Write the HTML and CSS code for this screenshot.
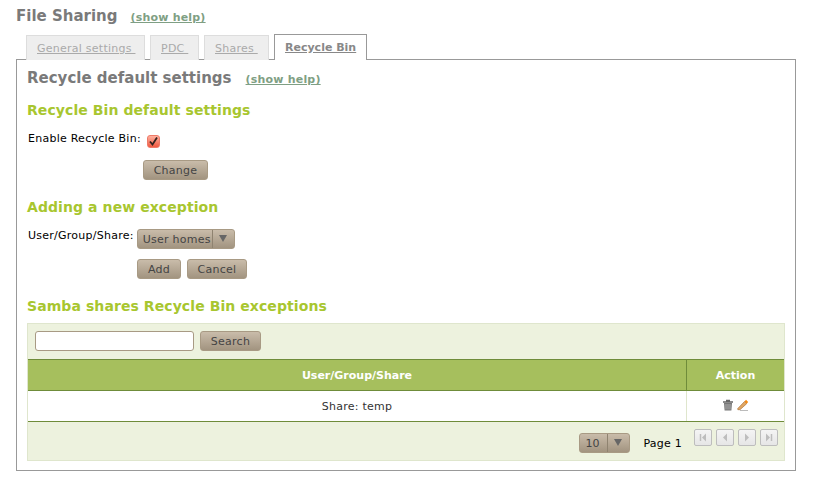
FILE: index.html
```html
<!DOCTYPE html>
<html lang="en">
<head>
  <meta charset="UTF-8" />
  <title>File Sharing</title>
  <link rel="stylesheet" href="styles.css">
</head>

<body>
  <div class="page-title">
    <h1>File Sharing</h1>
    <a class="help" href="#">(show help)</a>
  </div>

  <ul class="tabs">
    <li class="tab-general"><a href="#">General settings&nbsp;</a></li>
    <li class="tab-pdc"><a href="#">PDC&nbsp;</a></li>
    <li class="tab-shares"><a href="#">Shares&nbsp;</a></li>
    <li class="active"><a href="#">Recycle Bin</a></li>
  </ul>

  <div class="panel">
    <div class="panel-title">
      <h2>Recycle default settings</h2>
      <a class="help" href="#">(show help)</a>
    </div>

    <h3 class="first">Recycle Bin default settings</h3>
    <div class="field">
      <label>Enable Recycle Bin:</label>
      <span class="check">
        <svg width="11" height="11" viewBox="0 0 11 11"><path d="M2 5.500l2.500 3 4.500-7" fill="none" stroke="#33221e" stroke-width="1.800"/></svg>
      </span>
    </div>
    <div class="actions change-row">
      <button class="btn">Change</button>
    </div>

    <h3>Adding a new exception</h3>
    <div class="field select-field">
      <label>User/Group/Share:</label>
      <div class="select">
        <span class="select-value">User homes</span>
        <span class="select-arrow"></span>
      </div>
    </div>
    <div class="actions add-row">
      <button class="btn btn-add">Add</button>
      <button class="btn btn-cancel">Cancel</button>
    </div>

    <h3>Samba shares Recycle Bin exceptions</h3>
    <div class="grid">
      <div class="grid-search">
        <input type="text" />
        <button class="btn btn-search">Search</button>
      </div>
      <div class="grid-head">
        <div class="col-main">User/Group/Share</div>
        <div class="col-action">Action</div>
      </div>
      <div class="grid-row">
        <div class="col-main">Share: temp</div>
        <div class="col-action">
          <svg width="12" height="12" viewBox="0 0 12 12">
            <path d="M4 1.500h4M1 3h10" stroke="#666" stroke-width="1.400"/>
            <path d="M2 4h8l-.6 7.500H2.600z" fill="#777"/>
            <path d="M4 5v5.500M6 5v5.500M8 5v5.500" stroke="#bbb" stroke-width=".8"/>
          </svg>
          <svg width="12" height="12" viewBox="0 0 12 12">
            <path d="M.8 9.500L7.500 2.500l2.200 2.200-6.700 6H.8z" fill="#dfa765" stroke="#a3682f" stroke-width=".6"/>
            <path d="M7.500 2.500L9 .8l2.200 2.200-1.500 1.700z" fill="#f58a12"/>
            <path d="M3 11.500h8" stroke="#bbb"/>
          </svg>
        </div>
      </div>
      <div class="grid-foot">
        <div class="select small">
          <span class="select-value">10</span>
          <span class="select-arrow"></span>
        </div>
        <span class="page-no">Page 1</span>
        <div class="pager">
          <span class="pg"><svg width="8" height="9" viewBox="0 0 8 9"><path d="M1.500 1v7" stroke="#bdbdbd" stroke-width="1.500"/><path d="M7 .5v8L3 4.500z" fill="#bdbdbd"/></svg></span>
          <span class="pg"><svg width="8" height="9" viewBox="0 0 8 9"><path d="M6 .5v8L2 4.500z" fill="#bdbdbd"/></svg></span>
          <span class="pg"><svg width="8" height="9" viewBox="0 0 8 9"><path d="M2 .5v8L6 4.500z" fill="#bdbdbd"/></svg></span>
          <span class="pg"><svg width="8" height="9" viewBox="0 0 8 9"><path d="M1 .5v8L5 4.500z" fill="#bdbdbd"/><path d="M6.500 1v7" stroke="#bdbdbd" stroke-width="1.500"/></svg></span>
        </div>
      </div>
    </div>
  </div>
</body>
</html>
```

FILE: styles.css
```css
/* === Basic Reset === */
* {
  margin: 0;
  padding: 0;
  box-sizing: border-box;
}

body {
  font-family: 'DejaVu Sans', sans-serif;
  font-size: 11px;
  letter-spacing: 0.25px;
  color: #000;
  background: #fff;
  padding: 7px 19px 0 16px;
}

a {
  color: inherit;
}

.page-title,
.panel-title {
  display: flex;
  align-items: baseline;
}

h1,
h2 {
  font-size: 15px;
  font-weight: bold;
  letter-spacing: 0;
  color: #7a7a7a;
}

h1 {
  margin-right: -1px;
}

.help {
  margin-left: 14px;
  font-size: 11px;
  font-weight: bold;
  letter-spacing: 0.2px;
  color: #7f9f84;
}

/* === Tabs === */
.tabs {
  display: flex;
  list-style: none;
  margin: 9px 0 -1px 10px;
  gap: 5px;
  height: 26px;
  position: relative;
  z-index: 1;
}

.tabs li {
  background: #eee;
  border: 1px solid #ddd;
  border-bottom: none;
  padding: 6px 0 0 10px;
  height: 25px;
  margin-top: 1px;
  color: #aaa;
}

.tabs li.tab-general {
  width: 119px;
}

.tabs li.tab-pdc {
  width: 49px;
}

.tabs li.tab-shares {
  width: 65px;
}

.tabs li.active {
  background: #fff;
  border: 1px solid #999;
  border-bottom: none;
  width: 93px;
  height: 26px;
  margin-top: 0;
  color: #888;
  font-weight: bold;
  letter-spacing: 0;
}

/* === Panel === */
.panel {
  border: 1px solid #999;
  height: 412px;
  padding: 9px 10px 0;
}

h3 {
  font-size: 14px;
  font-weight: bold;
  letter-spacing: 0.08px;
  color: #a8c62f;
  line-height: 17px;
  margin-top: 19px;
}

h3.first {
  margin-top: 15px;
}

.field {
  display: flex;
  margin: 13px 0 0 1px;
  height: 18px;
}

.check {
  width: 13px;
  height: 13px;
  margin: 3px 0 0 6px;
  border: 1px solid #ee7a68;
  border-radius: 3px;
  background: linear-gradient(#ffb09f, #f0583f);
  display: flex;
  align-items: center;
  justify-content: center;
}

.actions {
  display: flex;
  gap: 6px;
}

.change-row {
  margin: 10px 0 0 116px;
}

.add-row {
  margin: 10px 0 0 110px;
}

.btn {
  height: 20px;
  padding: 0;
  font-family: inherit;
  font-size: 11px;
  letter-spacing: inherit;
  color: #444;
  background: linear-gradient(#c9bcaa, #a29480);
  border: 1px solid #a89a84;
  border-radius: 3px;
}

.change-row .btn {
  width: 65px;
}

.btn-add {
  width: 44px;
}

.btn-cancel {
  width: 60px;
}

.btn-search {
  width: 61px;
}

.select-field {
  margin-top: 13px;
  height: 20px;
}

.select {
  display: flex;
  height: 20px;
  margin-left: 3px;
  border: 1px solid #a89a84;
  border-radius: 3px;
  background: linear-gradient(#c9bcaa, #a29480);
  color: #444;
  line-height: 19px;
}

.select-value {
  padding-left: 5px;
  width: 75px;
  border-right: 1px solid #8f8370;
}

.select-arrow {
  width: 21px;
  position: relative;
}

.select-arrow::after {
  content: "";
  position: absolute;
  left: 6px;
  top: 5px;
  border: 4px solid transparent;
  border-top: 7px solid #666;
  border-bottom: none;
}

/* === Grid === */
.grid {
  margin-top: 8px;
  border: 1px solid #dfe6cd;
  background: #edf2de;
  height: 138px;
}

.grid-search {
  display: flex;
  gap: 6px;
  align-items: flex-start;
  height: 35px;
  padding: 7px 0 0 7px;
}

.grid-search input {
  width: 159px;
  height: 20px;
  border: 1px solid #a89a84;
  border-radius: 3px;
  background: #fff;
}

.grid-head {
  display: flex;
  height: 32px;
  background: #a6bf5d;
  border-top: 1px solid #6f8c3a;
  border-bottom: 1px solid #6f8c3a;
  color: #fff;
  font-weight: bold;
  letter-spacing: 0;
  line-height: 31px;
  text-align: center;
}

.col-main {
  flex: 1;
}

.col-action {
  width: 98px;
  border-left: 1px solid #6f8c3a;
}

.grid-row {
  display: flex;
  height: 31px;
  background: #fff;
  border-bottom: 1px solid #6f8c3a;
  line-height: 32px;
  text-align: center;
  color: #333;
}

.grid-row .col-action {
  border-left-color: #dfe6cd;
  display: flex;
  justify-content: center;
  align-items: center;
  gap: 3px;
  padding-bottom: 3px;
}

.grid-foot {
  display: flex;
  align-items: flex-start;
  padding: 11px 6px 0 0;
  justify-content: flex-end;
}

.select.small {
  width: 51px;
  margin-right: 13px;
}

.select.small .select-value {
  width: 28px;
}

.select.small .select-arrow {
  width: 21px;
}

.page-no {
  margin: 4px 12px 0 0;
}

.pager {
  display: flex;
  gap: 4px;
  margin-top: -4px;
}

.pg {
  width: 18px;
  height: 17px;
  border: 1px solid #bdbdbd;
  border-radius: 2px;
  background: linear-gradient(#f4f4f4, #e6e6e6);
  display: flex;
  align-items: center;
  justify-content: center;
}
```
